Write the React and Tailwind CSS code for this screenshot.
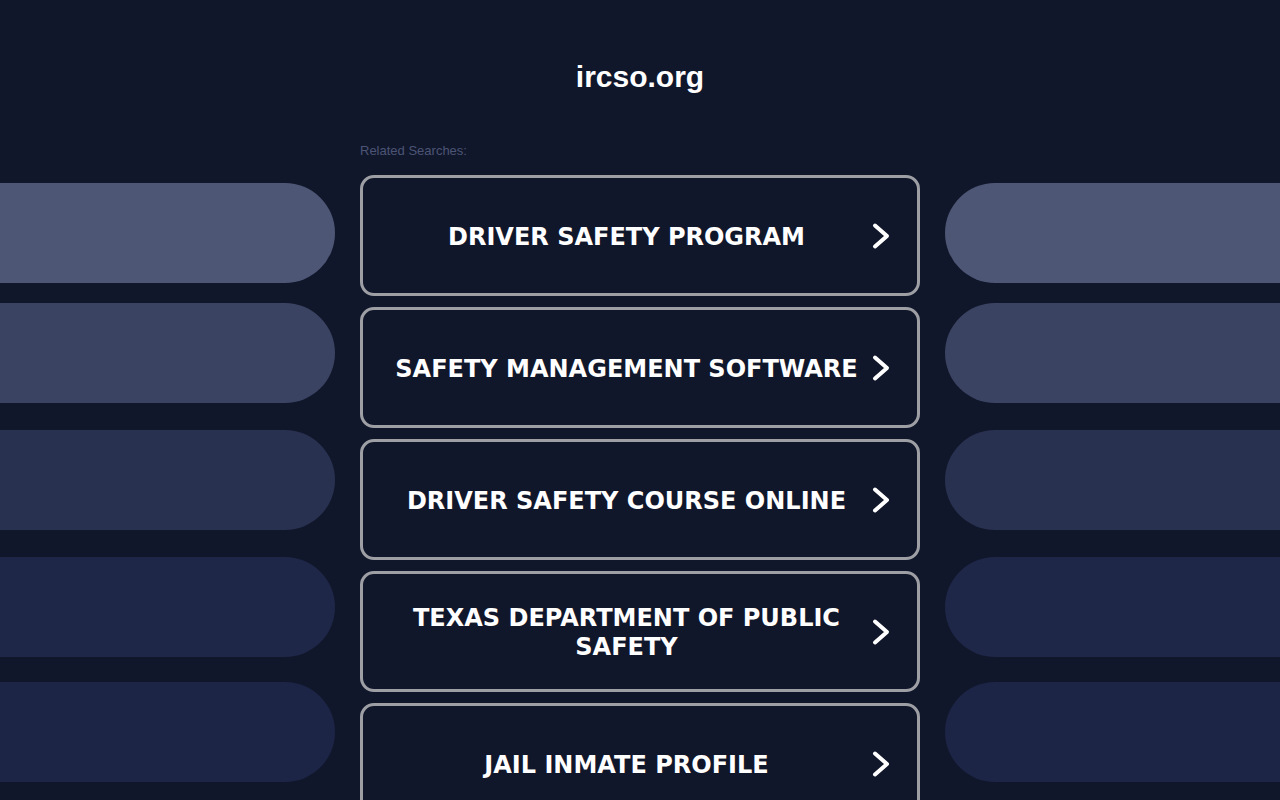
import React from 'react';

const searches = [
  'DRIVER SAFETY PROGRAM',
  'SAFETY MANAGEMENT SOFTWARE',
  'DRIVER SAFETY COURSE ONLINE',
  'TEXAS DEPARTMENT OF PUBLIC SAFETY',
  'JAIL INMATE PROFILE',
];

const pills = [
  { color: 'bg-[#4d5775]', mt: 'mt-[42px]' },
  { color: 'bg-[#3a4361]', mt: 'mt-[20px]' },
  { color: 'bg-[#283150]', mt: 'mt-[27px]' },
  { color: 'bg-[#1e2748]', mt: 'mt-[27px]' },
  { color: 'bg-[#1c2546]', mt: 'mt-[25px]' },
];

function Chevron() {
  return (
    <svg width="19" height="28" viewBox="0 0 19 28" fill="none" className="shrink-0">
      <polyline
        points="3,3.5 15,14 3,24.5"
        stroke="white"
        strokeWidth="4"
        strokeLinecap="round"
        strokeLinejoin="round"
      />
    </svg>
  );
}

function PillColumn({ side }) {
  return (
    <div className="flex flex-col w-[335px] shrink-0">
      {pills.map((p, i) => (
        <div
          key={i}
          className={`h-[100px] ${p.mt} ${p.color} ${side === 'left' ? 'rounded-r-[50px]' : 'rounded-l-[50px]'}`}
        />
      ))}
    </div>
  );
}

export default function App() {
  return (
    <div className="h-[800px] overflow-hidden bg-[#11172b]">
      <h1
        className="pt-[59px] text-center text-[30px] leading-[36px] font-bold text-white"
        style={{ fontFamily: '"Liberation Sans", Arial, sans-serif' }}
      >
        ircso.org
      </h1>
      <div className="mt-[46px] flex gap-[25px]">
        <PillColumn side="left" />
        <div className="w-[560px] shrink-0">
          <div
            className="text-[13px] leading-[20px] text-[#4c5475]"
            style={{ fontFamily: '"Liberation Sans", Arial, sans-serif' }}
          >
            Related Searches:
          </div>
          <div className="mt-[14px] flex flex-col gap-[11px]">
            {searches.map((s) => (
              <a
                key={s}
                href="#"
                className="flex h-[121px] items-center rounded-[14px] border-[3px] border-[#9d9fa4] bg-[#11172b] pl-[20px]"
              >
                <span
                  className="flex-1 pt-[3px] text-center text-[24px] leading-[29px] font-bold text-white"
                  style={{ fontFamily: '"DejaVu Sans", Verdana, sans-serif' }}
                >
                  {s}
                </span>
                <span className="ml-[2px] mr-[26px] flex">
                  <Chevron />
                </span>
              </a>
            ))}
          </div>
        </div>
        <PillColumn side="right" />
      </div>
    </div>
  );
}
